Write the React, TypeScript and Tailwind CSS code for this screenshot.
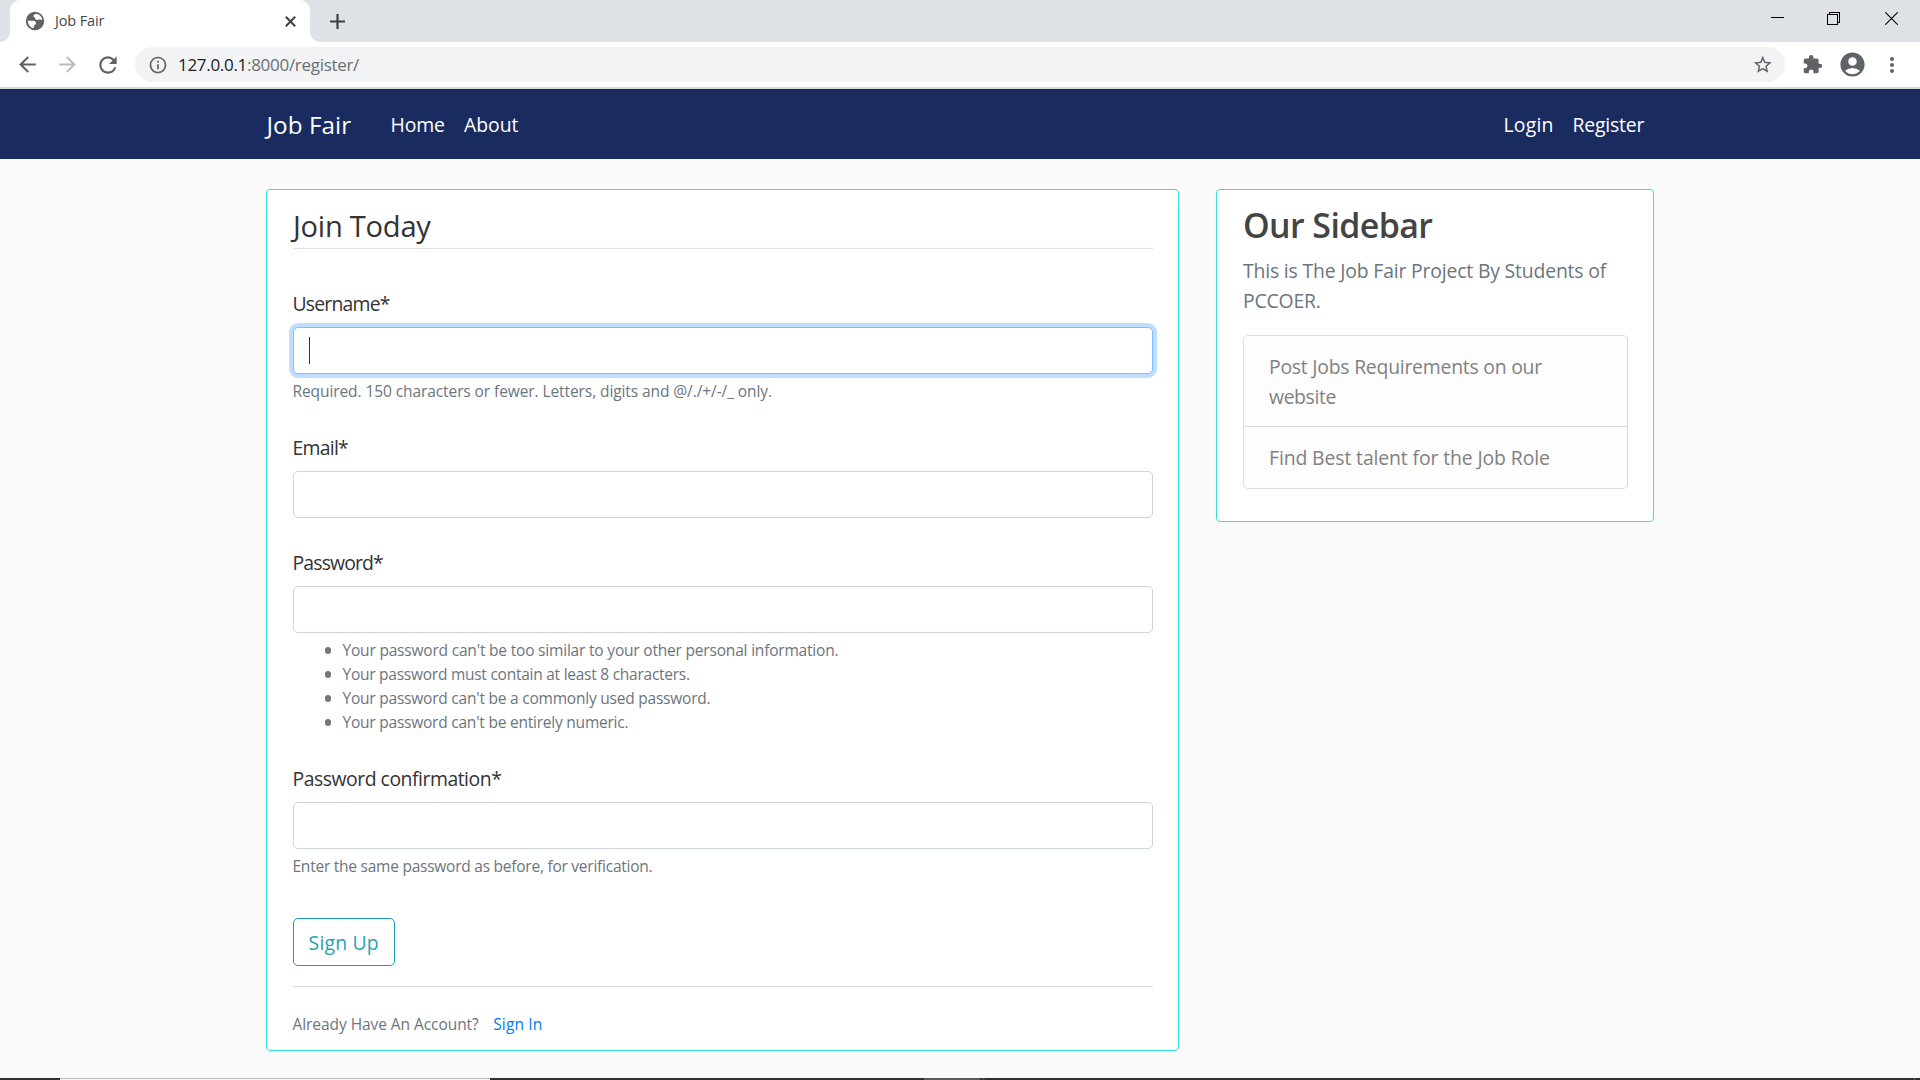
import type { ReactNode } from "react";
import {
  MdAccountCircle,
  MdArrowBack,
  MdArrowForward,
  MdExtension,
  MdInfoOutline,
  MdMoreVert,
  MdRefresh,
  MdStarBorder,
} from "react-icons/md";

function GlobeIcon() {
  return (
    <svg className="size-[22px]" viewBox="0 0 24 24">
      <circle cx="12" cy="12" r="10" fill="#5f6368" />
      <path
        fill="#fff"
        d="M4 11.8H9.5C11.5 11.8 13.5 13.2 13.2 14.8C13 16.3 10.8 16.3 10.8 17.6V19.8A8 8 0 0 1 4 11.8ZM13 4.1C9.8 5.4 9.6 7.8 12 8.3C12 10.6 14 11.4 15.5 10.5C17 9.7 18.5 10.8 19.9 11.2A8 8 0 0 0 13 4.1Z"
      />
    </svg>
  );
}

function TabStrip() {
  return (
    <div className="flex h-[42px] items-start justify-between bg-[#dee1e6]">
      <div className="flex h-[42px]">
        <div className="flex w-[10px] items-end bg-white">
          <div className="h-full w-[10px] rounded-br-[10px] bg-[#dee1e6]" />
        </div>
        <div className="flex w-[300px] items-center rounded-t-[10px] bg-white pl-[14px] pr-[14.5px]">
          <GlobeIcon />
          <span className="ml-[9px] flex-1 whitespace-nowrap pb-px text-[14.5px] leading-[20px] tracking-[-0.15px] text-[#45494d]">
            Job Fair
          </span>
          <svg width="11" height="11" viewBox="0 0 11 11" fill="none" stroke="#3c4043" strokeWidth="2">
            <path d="M0.8 0.8L10.2 10.2M10.2 0.8L0.8 10.2" />
          </svg>
        </div>
        <div className="flex w-[10px] bg-white">
          <div className="h-full w-[10px] rounded-bl-[10px] bg-[#dee1e6]" />
        </div>
        <div className="flex items-center pl-[10px]">
          <svg width="15" height="15" viewBox="0 0 15 15" fill="none" stroke="#3c4043" strokeWidth="2.2">
            <path d="M0 7.5H15M7.5 0V15" />
          </svg>
        </div>
      </div>
      <div className="flex items-start gap-[43px] pr-[22px] pt-[12px]">
        <svg width="13" height="13" viewBox="0 0 13 13" shapeRendering="crispEdges">
          <rect x="0" y="5" width="13" height="1" fill="#000" />
        </svg>
        <svg width="13" height="13" viewBox="0 0 13 13" fill="none" stroke="#000" shapeRendering="crispEdges">
          <path d="M0.5 2.5H10.5V12.5H0.5ZM2.5 2.5V0.5H12.5V10.5H10.5" />
        </svg>
        <svg className="ml-[2px]" width="13" height="13" viewBox="0 0 13 13" fill="none" stroke="#000" strokeWidth="1.1">
          <path d="M0.3 0.3L12.7 12.7M12.7 0.3L0.3 12.7" />
        </svg>
      </div>
    </div>
  );
}

function Toolbar() {
  return (
    <div className="flex h-[47px] items-center border-b-2 border-[#d9dadc] bg-white pl-[15px] pr-[15.5px] text-[#5f6368]">
      <MdArrowBack className="size-[25px]" />
      <MdArrowForward className="ml-[15px] size-[25px] text-[#babcbe]" />
      <MdRefresh className="ml-[15px] size-[26px]" />
      <div className="ml-[14px] flex h-[35px] w-[1650px] items-center rounded-full bg-[#f1f3f4] pl-[12.5px] pr-[12px]">
        <MdInfoOutline className="size-[20px]" />
        <div className="ml-[10.5px] flex flex-1 whitespace-nowrap pt-px text-[17px] leading-[24px] tracking-[-0.3px]">
          <span className="text-[#202124]">127.0.0.1</span>
          <span className="text-[#6a6e73]">:8000/register/</span>
        </div>
        <MdStarBorder className="size-[21.5px]" />
      </div>
      <MdExtension className="ml-[17px] size-[21px]" />
      <MdAccountCircle className="ml-[14.5px] size-[29px]" />
      <MdMoreVert className="ml-[13px] size-[24px]" />
    </div>
  );
}

function Navbar() {
  return (
    <nav className="flex h-[70px] items-center bg-[#1a2b5f] px-[266px] pt-px text-[19.4px] leading-[30px] text-white">
      <a className="w-[124.5px] pl-[0.5px] pt-px text-[24.25px] leading-[36px] tracking-[0.05px]">Job Fair</a>
      <a className="w-[73.5px] tracking-[-0.1px]">Home</a>
      <a className="flex-1 tracking-[-0.05px]">About</a>
      <a className="w-[69px] tracking-[0.2px]">Login</a>
      <a className="w-[81.5px] tracking-[-0.2px]">Register</a>
    </nav>
  );
}

function Field({ label, focused, children }: { label: ReactNode; focused?: boolean; children?: ReactNode }) {
  return (
    <div>
      <div className="h-[30px] text-[19.4px] leading-[30px] text-[#333]">{label}</div>
      <div
        className={
          focused
            ? "mt-[8px] flex h-[47px] items-center rounded-[5px] border border-[#80bdff] bg-white pl-[15px] shadow-[0_0_0_4px_#bfdeff]"
            : "mt-[8px] flex h-[47px] items-center rounded-[5px] border border-[#ced4da] bg-white pl-[15px]"
        }
      >
        {focused && <div className="h-[27px] w-px bg-[#333]" />}
      </div>
      {children}
    </div>
  );
}

function Rule({ children }: { children: ReactNode }) {
  return (
    <li className="flex items-center whitespace-nowrap">
      <span className="mr-[11.5px] mt-[1px] size-[6.5px] rounded-full bg-[#6c757d]" />
      {children}
    </li>
  );
}

function RegisterCard() {
  return (
    <main className="h-[862px] w-[913px] rounded-[4px] border border-[#33e0dc] bg-white px-[25.5px] pt-[13px]">
      <h1 className="h-[46px] border-b border-[#dcdfe3] pl-[0.5px] pt-px text-[29.1px] leading-[45px] tracking-[-0.25px] text-[#333]">
        Join Today
      </h1>
      <div className="pt-[40px]">
        <Field focused label={<span className="tracking-[-0.8px]">Username*</span>}>
          <p className="mt-[5px] text-[15.52px] leading-[24px] tracking-[-0.095px] text-[#6c757d]">
            Required. 150 characters or fewer. Letters, digits and @/./+/-/_ only.
          </p>
        </Field>
      </div>
      <div className="pt-[30px]">
        <Field label={<span className="tracking-[-0.75px]">Email*</span>} />
      </div>
      <div className="pt-[30px]">
        <Field label={<span className="tracking-[-0.85px]">Password*</span>}>
          <ul className="mt-[5px] pl-[32px] text-[15.52px] leading-[24px] text-[#6c757d]">
            <Rule>
              <span className="tracking-[-0.2px]">
                Your password can't be too similar to your other personal information.
              </span>
            </Rule>
            <Rule>
              <span className="tracking-[-0.26px]">Your password must contain at least 8 characters.</span>
            </Rule>
            <Rule>
              <span className="tracking-[-0.228px]">Your password can't be a commonly used password.</span>
            </Rule>
            <Rule>
              <span className="tracking-[-0.232px]">Your password can't be entirely numeric.</span>
            </Rule>
          </ul>
        </Field>
      </div>
      <div className="pt-[30px]">
        <Field label={<span className="tracking-[-0.48px]">Password confirmation*</span>}>
          <p className="mt-[5px] text-[15.52px] leading-[24px] tracking-[-0.25px] text-[#6c757d]">
            Enter the same password as before, for verification.
          </p>
        </Field>
      </div>
      <button className="mt-[40px] block h-[48px] w-[102.5px] whitespace-nowrap rounded-[5px] border border-[#17a2b8] pt-[2px] text-[19.4px] leading-[44px] tracking-[0.2px] text-[#2a9fb5]">
        Sign Up
      </button>
      <div className="mt-[20px] border-t border-[#dcdfe3] pt-[25px] text-[15.52px] leading-[24px] text-[#6c757d]">
        <span className="tracking-[-0.07px]">Already Have An Account?</span>
        <a className="ml-[14.5px] tracking-[0.13px] text-[#007bff]">Sign In</a>
      </div>
    </main>
  );
}

function Sidebar() {
  return (
    <aside className="h-[333px] w-[438px] rounded-[4px] border border-[#33e0dc] bg-white pl-[26px] pr-[25px] pt-[14px]">
      <h2 className="h-[42px] text-[33.95px] font-semibold leading-[42px] tracking-[-0.6px] text-[#444]">
        Our Sidebar
      </h2>
      <p className="mt-[10px] whitespace-nowrap text-[19.4px] leading-[30px] tracking-[-0.18px] text-[#6c757d]">
        This is The Job Fair Project By Students of
        <br />
        PCCOER.
      </p>
      <ul className="mt-[19px] rounded-[5px] border border-[#dcdddf] bg-[#fdfdfd] text-[19.4px] leading-[30px] text-[#818182]">
        <li className="h-[91px] border-b border-[#dcdddf] pl-[25px] pt-[16px]">
          <span className="whitespace-nowrap tracking-[-0.24px]">Post Jobs Requirements on our</span>
          <br />
          <span className="tracking-[-0.4px]">website</span>
        </li>
        <li className="h-[61px] whitespace-nowrap pl-[25px] pt-[16px] tracking-[-0.12px]">
          Find Best talent for the Job Role
        </li>
      </ul>
    </aside>
  );
}

function TaskbarEdge() {
  return (
    <div className="flex h-[2px] bg-[#303030]">
      <div className="w-[60px]" />
      <div className="w-[430px] border-t border-[#bdbdbd] bg-[#f5f5f5]" />
      <div className="w-[434px]" />
      <div className="w-[56px] bg-[#5c5c5c]" />
      <div className="w-px" />
      <div className="w-[4px] bg-[#444]" />
      <div className="flex-1" />
      <div className="mr-[5px] w-px bg-[#6a6a6a]" />
    </div>
  );
}

export default function App() {
  return (
    <div className="flex h-[1080px] w-[1920px] flex-col overflow-hidden bg-[#fafafa] font-['Open_Sans',sans-serif]">
      <TabStrip />
      <Toolbar />
      <Navbar />
      <div className="flex flex-1 items-start gap-[37px] pl-[266px] pt-[30px]">
        <RegisterCard />
        <Sidebar />
      </div>
      <TaskbarEdge />
    </div>
  );
}
